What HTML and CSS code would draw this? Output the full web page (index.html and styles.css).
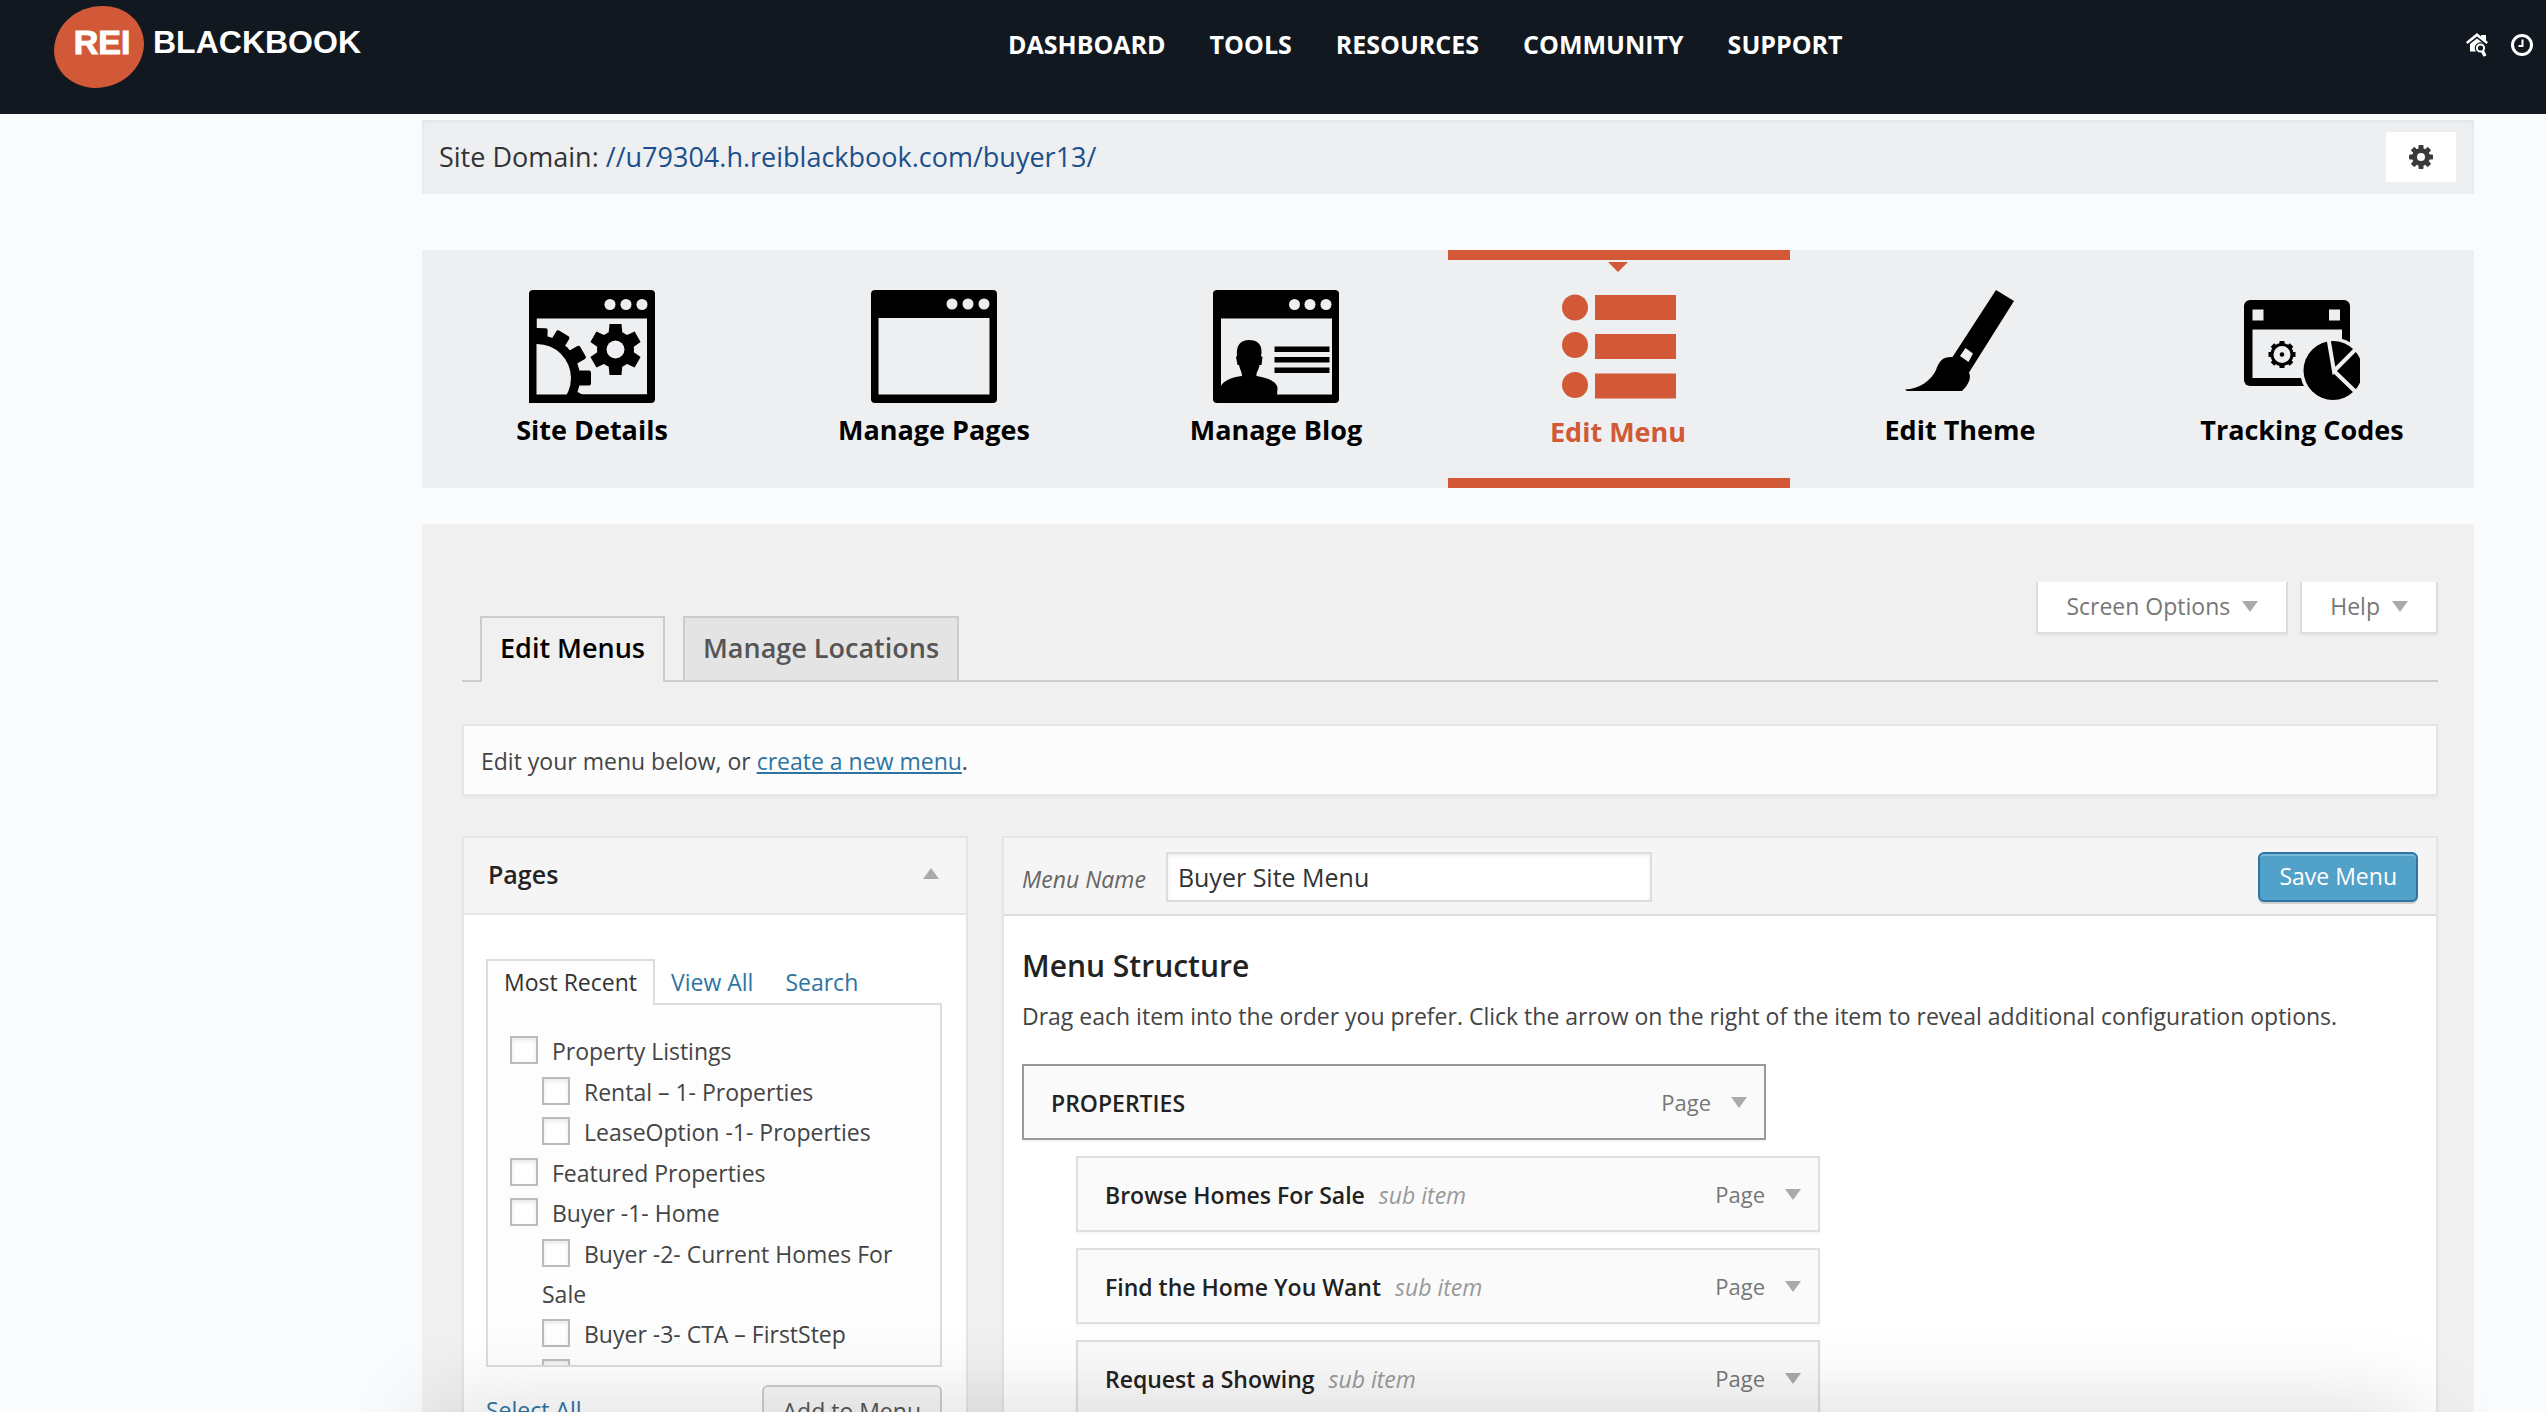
FILE: index.html
```html
<!DOCTYPE html>
<html lang="en">
<head>
    <meta charset="UTF-8">
    <meta name="viewport" content="width=device-width, initial-scale=1.0">
    <title>Edit Menu - REI BlackBook</title>
    <link rel="stylesheet" href="styles.css">
</head>
<body>

<!-- Top bar -->
<header class="topbar">
    <a href="#" class="logo">
        <span class="logo-badge">
            <svg class="logo-blob" viewBox="0 0 90 82"><path d="M49 0C72 0 90 16 90 39C89 62 68 82 41 82C18 81 0 66 0 44C1 19 22 0 49 0Z"/></svg>
            <span class="logo-rei">REI</span>
        </span>
        <span class="logo-name">BLACKBOOK</span>
    </a>
    <nav class="main-nav">
        <a href="#">DASHBOARD</a>
        <a href="#">TOOLS</a>
        <a href="#">RESOURCES</a>
        <a href="#">COMMUNITY</a>
        <a href="#">SUPPORT</a>
    </nav>
    <div class="top-icons">
        <a href="#" aria-label="Property search">
            <svg width="22" height="24" viewBox="0 0 22 24">
                <path d="M0 9L11 0L15 3.400V2H20V7.500L22 9L20.500 11L11 3.500L1.500 11Z" fill="#fff"/>
                <path d="M4 11L11 5.500L18 11V18.500H4Z" fill="#fff"/>
                <circle cx="14.500" cy="15" r="5.800" fill="#111820"/>
                <circle cx="14.500" cy="15" r="3.600" fill="none" stroke="#fff" stroke-width="2"/>
                <path d="M16.500 18L19 23" stroke="#fff" stroke-width="3.400"/>
            </svg>
        </a>
        <a href="#" aria-label="History">
            <svg width="22" height="24" viewBox="0 0 22 24">
                <circle cx="11" cy="12" r="9.500" fill="none" stroke="#fff" stroke-width="3"/>
                <path d="M11.500 6.500V13H7.500" fill="none" stroke="#fff" stroke-width="2"/>
            </svg>
        </a>
    </div>
</header>

<main class="content">
    <div class="domain-bar">
        <p>Site Domain: <a href="#">//u79304.h.reiblackbook.com/buyer13/</a></p>
        <button type="button" class="gear-btn" aria-label="Settings">
            <svg width="24" height="24" viewBox="-12 -12 24 24">
                <g fill="#3a3a3a">
                    <rect x="-2.500" y="-12" width="5" height="24" rx="1"/>
                    <rect x="-2.500" y="-12" width="5" height="24" rx="1" transform="rotate(45)"/>
                    <rect x="-2.500" y="-12" width="5" height="24" rx="1" transform="rotate(90)"/>
                    <rect x="-2.500" y="-12" width="5" height="24" rx="1" transform="rotate(135)"/>
                    <circle r="9"/>
                </g>
                <circle r="4" fill="#fff"/>
            </svg>
        </button>
    </div>

    <nav class="site-tabs">
        <a href="#" class="site-tab">
            <svg width="126" height="114" viewBox="0 0 126 114">
                <clipPath id="screen"><rect x="7" y="28" width="112" height="78"/></clipPath>
                <rect width="126" height="113" rx="4"/>
                <rect class="hole" x="7.500" y="28.500" width="110.500" height="76"/>
                <g class="hole"><circle cx="81" cy="14.500" r="5.500"/><circle cx="97" cy="14.500" r="5.500"/><circle cx="113" cy="14.500" r="5.500"/></g>
                <g transform="translate(86.500 59.500)">
                    <path d="M-6 -25.500H6L7 -15H-7ZM-6 25.500H6L7 15H-7Z"/>
                    <path d="M-6 -25.500H6L7 -15H-7ZM-6 25.500H6L7 15H-7Z" transform="rotate(60)"/>
                    <path d="M-6 -25.500H6L7 -15H-7ZM-6 25.500H6L7 15H-7Z" transform="rotate(120)"/>
                    <circle r="18.500"/>
                    <circle class="hole" r="9"/>
                </g>
                <g clip-path="url(#screen)">
                    <g transform="translate(8 88)">
                        <rect x="-9" y="-50" width="18" height="20" rx="2" transform="rotate(2)"/>
                        <rect x="-7.500" y="-52" width="15" height="20" rx="2" transform="rotate(31)"/>
                        <rect x="-7.500" y="-53" width="15" height="20" rx="2" transform="rotate(60)"/>
                        <rect x="-7.500" y="-54" width="15" height="20" rx="2" transform="rotate(90)"/>
                        <rect x="-7.500" y="-53" width="15" height="20" rx="2" transform="rotate(119)"/>
                        <circle r="43"/>
                        <circle class="hole" r="34"/>
                    </g>
                </g>
                <path d="M0 26H7.500V113H0ZM0 104.500H126V110H0Z"/>
            </svg>
            <span>Site Details</span>
        </a>
        <a href="#" class="site-tab">
            <svg width="126" height="114" viewBox="0 0 126 114">
                <rect width="126" height="113" rx="4"/>
                <rect class="hole" x="7.500" y="28" width="111" height="76.500"/>
                <g class="hole"><circle cx="81" cy="14" r="5.500"/><circle cx="97" cy="14" r="5.500"/><circle cx="113" cy="14" r="5.500"/></g>
            </svg>
            <span>Manage Pages</span>
        </a>
        <a href="#" class="site-tab">
            <svg width="126" height="114" viewBox="0 0 126 114">
                <rect width="126" height="113" rx="4"/>
                <rect class="hole" x="8" y="28.500" width="111" height="76"/>
                <g class="hole"><circle cx="81.500" cy="14.500" r="5.500"/><circle cx="97" cy="14.500" r="5.500"/><circle cx="113" cy="14.500" r="5.500"/></g>
                <path d="M36 50C45 50 49 55 48.500 63L48 66L49.500 67L48.500 75H46.500C46 80 43 82 43.500 86C52 87 64 91 64.500 98L64 106H8V96C10 91 19 87 29 86C29 82 27 80 26 75H24.500L23 67L24 66C23 56 27 50 36 50Z"/>
                <path d="M61.500 56.500H116.500V62H61.500ZM61.500 67H116.500V72.500H61.500ZM61.500 77.500H116.500V83H61.500Z"/>
            </svg>
            <span>Manage Blog</span>
        </a>
        <a href="#" class="site-tab active">
            <svg width="126" height="114" viewBox="-7 -4 126 114">
                <circle cx="13" cy="13.500" r="13"/><rect x="33" y="1" width="81" height="25"/>
                <circle cx="13" cy="51" r="13"/><rect x="33" y="40" width="81" height="25"/>
                <circle cx="13" cy="91" r="13"/><rect x="33" y="79.500" width="81" height="25"/>
            </svg>
            <span>Edit Menu</span>
        </a>
        <a href="#" class="site-tab">
            <svg width="126" height="114" viewBox="-8 2 126 114">
                <path d="M91 2L109 13L64 84.500C67 91 62 98 57 103H2L0 101.500C14 101 26 93 31 82C34 73 38 68.500 47.500 69Z"/>
                <path class="hole" d="M60.500 60L68 65.500L63.500 74L55 68Z"/>
            </svg>
            <span>Edit Theme</span>
        </a>
        <a href="#" class="site-tab">
            <svg width="126" height="114" viewBox="-5 -10 126 114">
                <clipPath id="pie"><rect x="50" y="30" width="66" height="80"/></clipPath>
                <rect width="106" height="86" rx="6"/>
                <rect class="hole" x="8.500" y="29.500" width="89.500" height="48.500"/>
                <rect class="hole" x="8.500" y="9.500" width="11" height="11"/>
                <rect class="hole" x="85" y="9.500" width="11" height="11"/>
                <g transform="translate(38 54.500)">
                    <rect x="-2.500" y="-13.500" width="5" height="27"/>
                    <rect x="-2.500" y="-13.500" width="5" height="27" transform="rotate(45)"/>
                    <rect x="-2.500" y="-13.500" width="5" height="27" transform="rotate(90)"/>
                    <rect x="-2.500" y="-13.500" width="5" height="27" transform="rotate(135)"/>
                    <circle r="11.500"/>
                    <circle class="hole" r="8.500"/>
                    <circle r="2.300"/>
                </g>
                <circle class="hole" cx="89" cy="70.500" r="33"/>
                <g clip-path="url(#pie)">
                    <circle cx="89" cy="70.500" r="29.500"/>
                    <path class="cut" d="M84 36L90 71L116 45M90 71L116 96"/>
                </g>
            </svg>
            <span>Tracking Codes</span>
        </a>
    </nav>

    <section class="admin">
        <div class="screen-meta">
            <button type="button">Screen Options <i class="down"></i></button>
            <button type="button">Help <i class="down"></i></button>
        </div>

        <nav class="tab-row">
            <a href="#" class="active">Edit Menus</a>
            <a href="#">Manage Locations</a>
        </nav>

        <p class="notice">Edit your menu below, or <a href="#">create a new menu</a>.</p>

        <div class="columns">
            <div class="box pages">
                <div class="pages-head">
                    <h3>Pages</h3>
                    <i class="up"></i>
                </div>
                <div class="pages-body">
                    <nav class="page-tabs">
                        <a href="#" class="active">Most Recent</a>
                        <a href="#">View All</a>
                        <a href="#">Search</a>
                    </nav>
                    <div class="page-list">
                        <ul>
                            <li><label><input type="checkbox"> Property Listings</label>
                                <ul>
                                    <li><label><input type="checkbox"> Rental – 1- Properties</label></li>
                                    <li><label><input type="checkbox"> LeaseOption -1- Properties</label></li>
                                </ul>
                            </li>
                            <li><label><input type="checkbox"> Featured Properties</label></li>
                            <li><label><input type="checkbox"> Buyer -1- Home</label>
                                <ul>
                                    <li><label><input type="checkbox"> Buyer -2- Current Homes For Sale</label></li>
                                    <li><label><input type="checkbox"> Buyer -3- CTA – FirstStep</label></li>
                                    <li><label><input type="checkbox" aria-label="Next page"></label></li>
                                </ul>
                            </li>
                        </ul>
                    </div>
                    <div class="page-actions">
                        <a href="#">Select All</a>
                        <button type="button">Add to Menu</button>
                    </div>
                </div>
            </div>

            <div class="box menu-edit">
                <div class="menu-head">
                    <label for="menu-name">Menu Name</label>
                    <input type="text" id="menu-name" value="Buyer Site Menu">
                    <button type="button" class="save-btn">Save Menu</button>
                </div>
                <div class="menu-body">
                    <h2>Menu Structure</h2>
                    <p>Drag each item into the order you prefer. Click the arrow on the right of the item to reveal additional configuration options.</p>
                    <ul class="menu-items">
                        <li class="hover"><b>PROPERTIES</b><span class="type">Page</span><i class="down"></i></li>
                        <li class="sub"><b>Browse Homes For Sale</b><em>sub item</em><span class="type">Page</span><i class="down"></i></li>
                        <li class="sub"><b>Find the Home You Want</b><em>sub item</em><span class="type">Page</span><i class="down"></i></li>
                        <li class="sub"><b>Request a Showing</b><em>sub item</em><span class="type">Page</span><i class="down"></i></li>
                    </ul>
                </div>
            </div>
        </div>
    </section>
</main>

<div class="bottom-shadow"></div>

</body>
</html>
```

FILE: styles.css
```css
* {
    box-sizing: border-box;
}

body {
    margin: 0;
    height: 100vh;
    overflow: hidden;
    background: #fafbfd;
    color: #444;
    font-family: "Open Sans", sans-serif;
    font-size: 23px;
    line-height: 32px;
}

a {
    color: #2e74a2;
    text-decoration: none;
}

h2, h3, p, ul {
    margin: 0;
    padding: 0;
}

ul {
    list-style: none;
}

button, input {
    margin: 0;
    font-family: inherit;
    font-size: inherit;
}

button {
    cursor: pointer;
}

svg {
    display: block;
}

/* Top bar */
.topbar {
    display: grid;
    grid-template-columns: 954px auto 1fr;
    align-items: start;
    height: 114px;
    padding: 6px 13px 0 54px;
    background: #111820;
}

.logo {
    display: flex;
    align-items: center;
    gap: 9px;
    color: #fff;
    font-family: "Liberation Sans", Arial, sans-serif;
    font-size: 32px;
    font-weight: bold;
}

.logo-badge {
    display: grid;
    width: 90px;
    height: 82px;
}

.logo-badge > * {
    grid-area: 1 / 1;
}

.logo-blob {
    fill: #d15937;
}

.logo-rei {
    padding: 20px 0 0 6px;
    font-size: 34px;
    text-align: center;
    -webkit-text-stroke: 1px #fff;
}

.logo-name {
    padding-bottom: 10px;
}

.main-nav {
    display: flex;
    gap: 44px;
    padding-top: 22px;
    font-size: 25px;
    font-weight: bold;
}

.main-nav a {
    color: #fff;
}

.top-icons {
    display: flex;
    justify-content: flex-end;
    gap: 23px;
    padding-top: 27px;
}

/* Main column */
.content {
    margin: 6px 72px 0 422px;
}

.domain-bar {
    display: flex;
    align-items: center;
    justify-content: space-between;
    height: 74px;
    padding: 0 18px 0 17px;
    background: #eeeff1;
    box-shadow: inset 0 2px 4px rgba(0, 0, 0, 0.05);
    color: #333;
    font-size: 27px;
}

.domain-bar a {
    color: #1b4f8c;
}

.gear-btn {
    display: flex;
    align-items: center;
    justify-content: center;
    width: 70px;
    height: 50px;
    padding: 0;
    border: 0;
    background: #fff;
}

/* Site tabs */
.site-tabs {
    display: grid;
    grid-template-columns: repeat(6, 1fr);
    margin-top: 56px;
    background: #eeeff1;
}

.site-tab {
    position: relative;
    display: flex;
    flex-direction: column;
    align-items: center;
    gap: 10px;
    height: 238px;
    padding: 30px 2px 0 0;
    border: solid transparent;
    border-width: 10px 0;
    color: #000;
    font-size: 27px;
    font-weight: bold;
}

.site-tab svg {
    fill: currentColor;
}

.site-tab .hole {
    fill: #eeeff1;
}

.site-tab .cut {
    fill: none;
    stroke: #eeeff1;
    stroke-width: 4px;
}

.site-tab.active {
    gap: 12px;
    border-color: #d15937;
    color: #d15937;
}

.site-tab.active::before {
    content: "";
    position: absolute;
    top: 2px;
    border: 10px solid transparent;
    border-top-color: #d15937;
    border-bottom: 0;
}

/* Admin panel */
.admin {
    margin-top: 36px;
    padding: 58px 36px 40px 40px;
    background: #f0f0f0;
}

.down, .up {
    display: inline-block;
    flex: none;
    border: 8px solid transparent;
}

.down {
    border-top: 11px solid #aaa;
    border-bottom: 0;
}

.up {
    border-bottom: 11px solid #aaa;
    border-top: 0;
}

.screen-meta {
    display: flex;
    justify-content: flex-end;
    gap: 12px;
}

.screen-meta button {
    display: flex;
    align-items: center;
    gap: 12px;
    height: 52px;
    padding: 0 28px 2px;
    border: 2px solid #ddd;
    border-top: 0;
    background: #fff;
    box-shadow: 0 2px 2px rgba(0, 0, 0, 0.04);
    color: #777;
}

.tab-row {
    display: flex;
    gap: 18px;
    margin-top: -18px;
    padding-left: 18px;
    border-bottom: 2px solid #ccc;
    font-size: 27px;
    font-weight: 600;
}

.tab-row a {
    height: 64px;
    padding: 14px 18px 0;
    border: 2px solid #ccc;
    border-bottom: 0;
    background: #e4e4e4;
    color: #555;
}

.tab-row .active {
    height: 66px;
    margin-bottom: -2px;
    background: #f0f0f0;
    color: #000;
}

.notice {
    margin-top: 42px;
    padding: 19px 17px 17px;
    border: 2px solid #e5e5e5;
    background: #fcfcfc;
    box-shadow: 0 2px 2px rgba(0, 0, 0, 0.04);
}

.notice a {
    text-decoration: underline;
}

.columns {
    display: grid;
    grid-template-columns: 506px 1fr;
    gap: 34px;
    margin-top: 40px;
}

.box {
    border: 2px solid #e5e5e5;
    background: #fff;
    box-shadow: 0 2px 2px rgba(0, 0, 0, 0.04);
}

/* Pages box */
.pages-head {
    display: flex;
    align-items: center;
    justify-content: space-between;
    height: 77px;
    padding: 0 27px 4px 24px;
    border-bottom: 2px solid #e5e5e5;
    background: #f5f5f5;
}

.pages-head h3 {
    color: #222;
    font-size: 25px;
    font-weight: 600;
}

.pages-body {
    padding: 44px 24px 44px 22px;
}

.page-tabs {
    display: flex;
}

.page-tabs a {
    height: 46px;
    padding: 7px 16px 0;
}

.page-tabs .active {
    position: relative;
    border: 2px solid #ddd;
    border-bottom: 0;
    padding-top: 5px;
    background: #fdfdfd;
    color: #333;
}

.page-list {
    height: 364px;
    margin-top: -2px;
    padding: 26px 22px;
    overflow: hidden;
    border: 2px solid #ddd;
    background: #fdfdfd;
    line-height: 40px;
}

.page-list ul ul {
    padding: 1px 0 1px 32px;
}

.page-list input {
    appearance: none;
    width: 28px;
    height: 28px;
    margin-right: 8px;
    border: 2px solid #bbb;
    background: #fff;
    box-shadow: inset 0 2px 4px rgba(0, 0, 0, 0.1);
    vertical-align: -4px;
}

.page-actions {
    display: flex;
    justify-content: space-between;
    margin-top: 18px;
}

.page-actions a {
    padding-top: 9px;
}

.page-actions button {
    height: 52px;
    padding: 0 19px;
    border: 2px solid #ccc;
    border-radius: 6px;
    background: #f7f7f7;
    color: #555;
}

/* Menu box */
.menu-head {
    display: flex;
    align-items: center;
    height: 78px;
    padding: 2px 18px 0;
    border-bottom: 2px solid #ddd;
    background: #f5f5f5;
}

.menu-head label {
    padding-top: 4px;
    color: #666;
    font-style: italic;
}

.menu-head input {
    width: 486px;
    height: 50px;
    margin-left: 20px;
    padding: 0 10px;
    border: 2px solid #ddd;
    background: #fff;
    box-shadow: inset 0 2px 4px rgba(0, 0, 0, 0.07);
    color: #333;
    font-size: 25px;
}

.save-btn {
    height: 50px;
    margin-left: auto;
    padding: 0 19px 2px;
    border: 2px solid #2e74a2;
    border-radius: 6px;
    background: #52a1c9;
    box-shadow: inset 0 2px 0 #78b8d9, 0 2px 0 rgba(0, 0, 0, 0.15);
    color: #fff;
}

.menu-body {
    padding: 32px 18px;
}

.menu-body h2 {
    color: #222;
    font-size: 30px;
    font-weight: 600;
    line-height: 36px;
}

.menu-body p {
    margin-top: 16px;
}

.menu-items {
    display: flex;
    flex-direction: column;
    gap: 16px;
    margin-top: 32px;
}

.menu-items li {
    display: flex;
    align-items: center;
    width: 744px;
    height: 76px;
    padding: 0 17px 0 27px;
    border: 2px solid #dfdfdf;
    background: #fafafa;
    box-shadow: 0 2px 2px rgba(0, 0, 0, 0.04);
}

.menu-items .hover {
    border-color: #999;
}

.menu-items .sub {
    margin-left: 54px;
}

.menu-items b, .menu-items em {
    padding-top: 2px;
}

.menu-items b {
    color: #222;
    font-weight: 600;
}

.menu-items em {
    margin-left: 14px;
    color: #999;
}

.menu-items .type {
    margin-left: auto;
    margin-right: 20px;
    color: #777;
    font-size: 22px;
}

/* Shadow cast along the bottom of the window */
.bottom-shadow {
    position: fixed;
    left: 450px;
    right: 150px;
    bottom: -60px;
    height: 40px;
    box-shadow: 0 0 90px 20px rgba(0, 0, 0, 0.16);
    pointer-events: none;
}
```
